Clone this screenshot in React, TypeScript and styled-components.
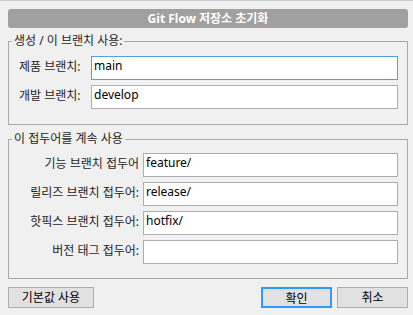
import { createGlobalStyle } from "styled-components";
import styled from "styled-components";

const GlobalStyle = createGlobalStyle`
  html, body {
    margin: 0;
    padding: 0;
    background: #f0f0f0;
  }
  body {
    font-family: "Noto Sans", "Noto Sans CJK KR", sans-serif;
    font-size: 12px;
    color: #1e1e1e;
  }
`;

const Dialog = styled.div`
  display: flex;
  flex-direction: column;
  width: 413px;
  height: 315px;
  box-sizing: border-box;
  border-top: 1px solid #cfcfcf;
  padding: 8px 5px 0 8px;
  background: #f0f0f0;
`;

const TitleBar = styled.div`
  height: 19px;
  border-radius: 3px;
  background: #a0a0a0;
  color: #ffffff;
  font-weight: bold;
  font-size: 12px;
  line-height: 19px;
  text-align: center;
`;

const Group = styled.fieldset<{ $top: number; $bottom: number }>`
  margin: 5px 0 0;
  min-width: 0;
  border: 1px solid #a9a9a9;
  padding: ${({ $top }) => $top}px 9px ${({ $bottom }) => $bottom}px 3px;
  display: flex;
  flex-direction: column;
  gap: 5px;

  & + & {
    margin-top: 6px;
  }
`;

const Legend = styled.legend`
  padding: 0 2px;
  font-size: 12px;
  line-height: 16px;
  color: #1e1e1e;
`;

const Row = styled.div<{ $labelWidth: number; $align: "left" | "right" }>`
  display: grid;
  grid-template-columns: ${({ $labelWidth }) => $labelWidth}px 1fr;
  align-items: center;
  label {
    text-align: ${({ $align }) => $align};
    padding: ${({ $align }) => ($align === "left" ? "0 0 4px 7px" : "0 4px 4px 0")};
    white-space: nowrap;
  }
`;

const Field = styled.input<{ $focused?: boolean }>`
  box-sizing: border-box;
  height: 24px;
  width: 100%;
  margin: 0;
  padding: 0 2px 5px;
  border: 1px solid ${({ $focused }) => ($focused ? "#569de5" : "#abadb3")};
  background: #ffffff;
  font-family: "Noto Sans", "Noto Sans CJK KR", sans-serif;
  font-size: 12px;
  color: #000;
  outline: none;
`;

const Footer = styled.div`
  display: flex;
  align-items: center;
  margin-top: 8px;
  gap: 5px;
`;

const Spacer = styled.div`
  flex: 1;
`;

const Button = styled.button<{ $primary?: boolean; $width: number }>`
  box-sizing: border-box;
  width: ${({ $width }) => $width}px;
  height: 21px;
  margin: 0;
  padding: 0 0 2px;
  background: #e1e1e1;
  border: ${({ $primary }) => ($primary ? "2px solid #3399ff" : "1px solid #adadad")};
  font-family: "Noto Sans", "Noto Sans CJK KR", sans-serif;
  font-size: 12px;
  color: #000;
`;

const productRows = [
  { label: "제품 브랜치:", value: "main", focused: true },
  { label: "개발 브랜치:", value: "develop" },
];

const prefixRows = [
  { label: "기능 브랜치 접두어", value: "feature/" },
  { label: "릴리즈 브랜치 접두어:", value: "release/" },
  { label: "핫픽스 브랜치 접두어:", value: "hotfix/" },
  { label: "버전 태그 접두어:", value: "" },
];

export default function App() {
  return (
    <Dialog>
      <GlobalStyle />
      <TitleBar>Git Flow 저장소 초기화</TitleBar>

      <Group $top={7} $bottom={15}>
        <Legend>생성 / 이 브랜치 사용:</Legend>
        {productRows.map((r) => (
          <Row key={r.label} $labelWidth={79} $align="left">
            <label>{r.label}</label>
            <Field defaultValue={r.value} $focused={r.focused} />
          </Row>
        ))}
      </Group>

      <Group $top={6} $bottom={14}>
        <Legend>이 접두어를 계속 사용</Legend>
        {prefixRows.map((r) => (
          <Row key={r.label} $labelWidth={131} $align="right">
            <label>{r.label}</label>
            <Field defaultValue={r.value} />
          </Row>
        ))}
      </Group>

      <Footer>
        <Button $width={86}>기본값 사용</Button>
        <Spacer />
        <Button $primary $width={71}>확인</Button>
        <Button $width={71}>취소</Button>
      </Footer>
    </Dialog>
  );
}
